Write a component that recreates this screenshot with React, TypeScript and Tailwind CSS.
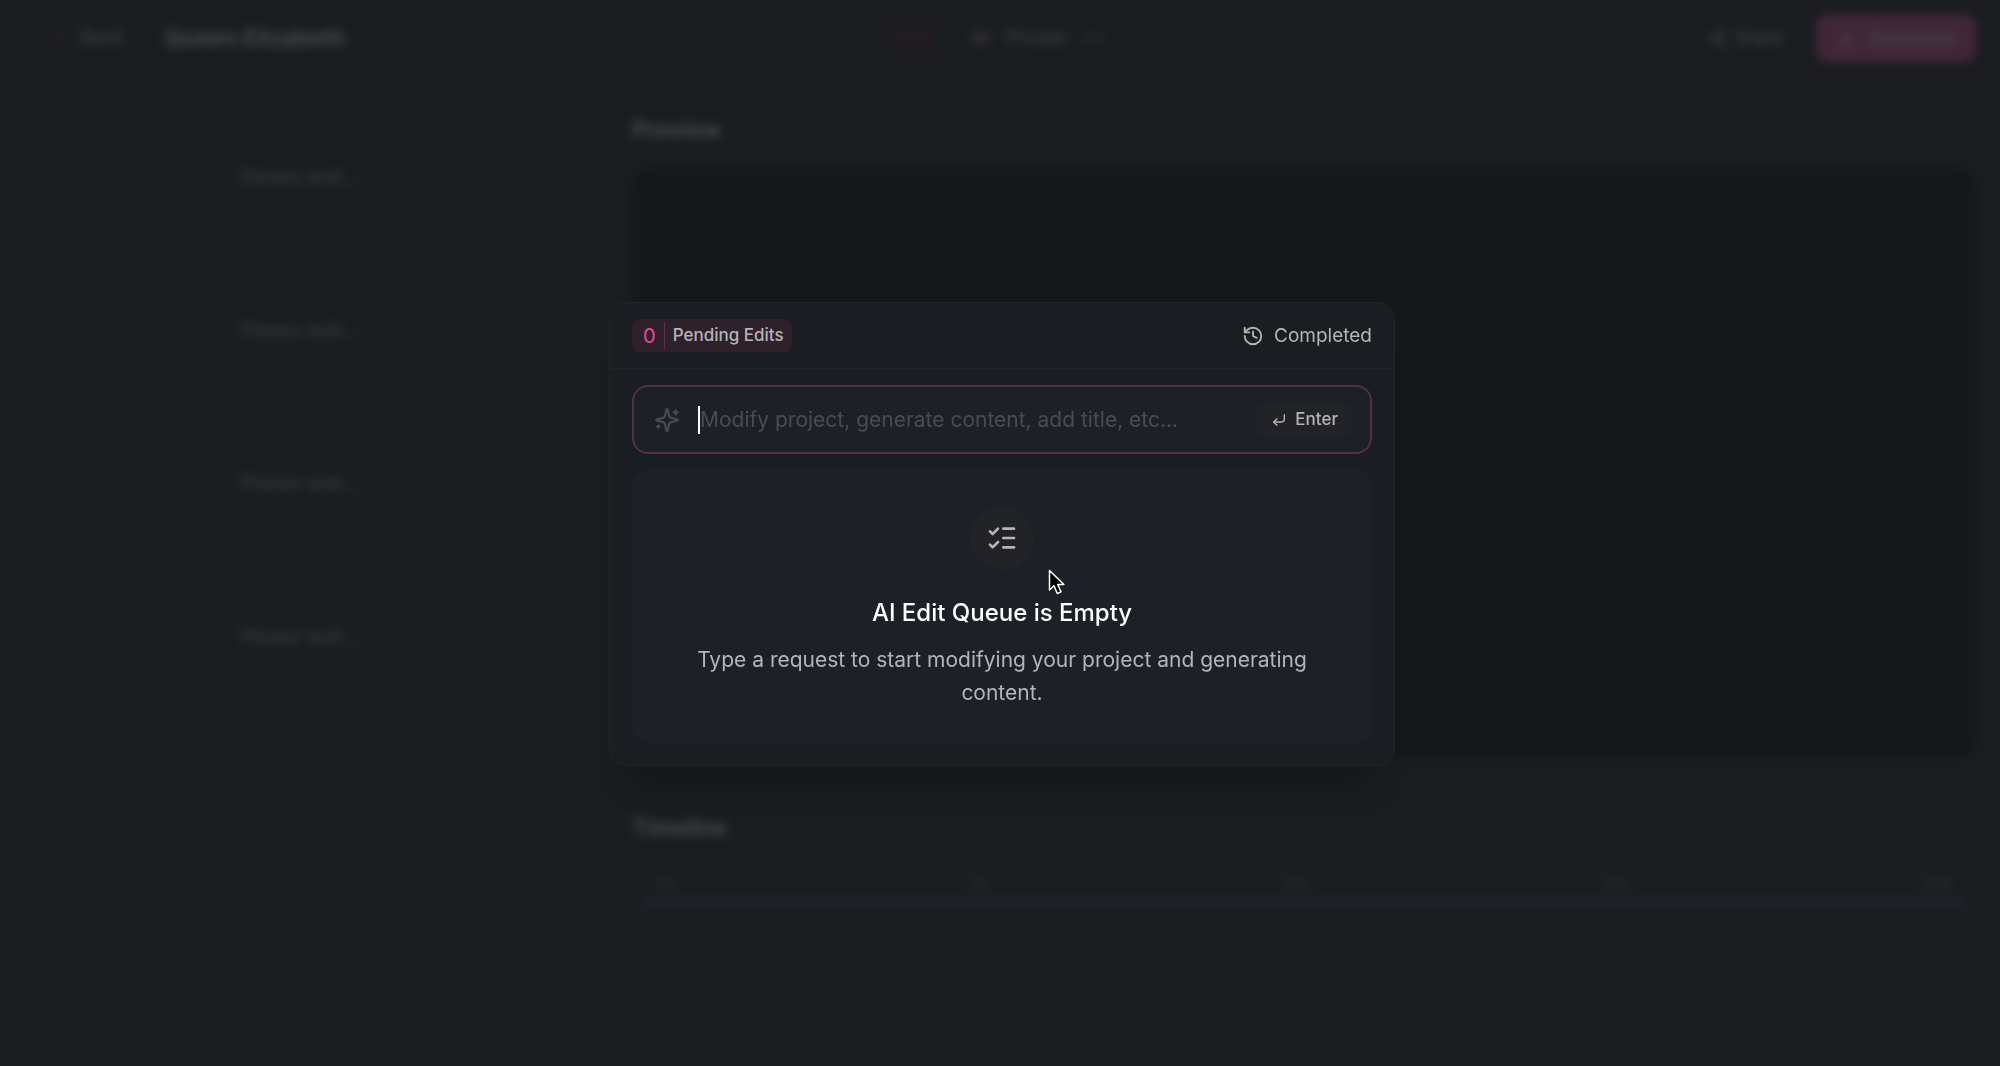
import { useState } from 'react';
import { ChevronLeft, CornerDownLeft, History, ListChecks, Share2, Download, Volume2, Ellipsis } from 'lucide-react';

const TICKS = ['0s', '5s', '10s', '15s', '20s'];
const CLIPS = [1, 2, 3, 4];

function SparklesIcon() {
    return (
        <svg
            viewBox="0 0 24 24"
            className="h-[26px] w-[26px] shrink-0 text-[#4b4b50]"
            fill="none"
            stroke="currentColor"
            strokeWidth="2"
            strokeLinecap="round"
            strokeLinejoin="round"
            aria-hidden="true"
        >
            <path d="M9.937 15.5A2 2 0 0 0 8.5 14.063l-6.135-1.582a.5.5 0 0 1 0-.962L8.5 9.936A2 2 0 0 0 9.937 8.5l1.582-6.135a.5.5 0 0 1 .963 0L14.063 8.5A2 2 0 0 0 15.5 9.937l6.135 1.581a.5.5 0 0 1 0 .964L15.5 14.063a2 2 0 0 0-1.437 1.437l-1.582 6.135a.5.5 0 0 1-.963 0z" />
            <path d="M20 3v4" />
            <path d="M22 5h-4" />
            <path d="M4 17v2" />
            <path d="M5 18H3" />
        </svg>
    );
}

function Cursor() {
    return (
        <svg viewBox="0 0 18 26" className="absolute left-[439px] top-[267px] h-[26px] w-[18px]" aria-hidden="true">
            <path
                d="M1.5 1.5v19.5l4.5-4.2 3.3 7.7 3.7-1.6-3.3-7.4h6.2z"
                fill="#000"
                stroke="#fff"
                strokeWidth="1.5"
                strokeLinejoin="round"
            />
        </svg>
    );
}

function Editor() {
    return (
        <div className="min-h-screen text-white" aria-hidden="true">
            <header className="grid h-[76px] grid-cols-3 items-center px-6">
                <div className="flex items-center gap-10 pl-7">
                    <button className="flex items-center gap-2 text-[19px] text-zinc-300">
                        <ChevronLeft className="h-5 w-5 text-pink-500" />
                        Back
                    </button>
                    <h1 className="text-[23px] font-semibold">Queen Elizabeth</h1>
                </div>
                <div className="flex items-center justify-center gap-9 text-lg text-zinc-300">
                    <span className="text-base font-semibold text-pink-800">BETA</span>
                    <div className="flex items-center gap-4">
                        <Volume2 className="h-5 w-5 text-pink-200" />
                        Private
                        <Ellipsis className="h-6 w-6" />
                    </div>
                </div>
                <div className="flex items-center justify-end gap-8">
                    <button className="flex items-center gap-2 text-lg text-zinc-300">
                        <Share2 className="h-5 w-5" />
                        Share
                    </button>
                    <button className="flex h-12 w-40 items-center justify-center gap-3 rounded-xl bg-[#d84e98] text-lg font-medium text-pink-100">
                        <Download className="h-5 w-5" />
                        Download
                    </button>
                </div>
            </header>

            <div className="grid grid-cols-[600px_1fr]">
                <aside className="flex flex-col pt-6">
                    {CLIPS.map((clip) => (
                        <div key={clip} className="flex h-[153px] justify-center pt-16 text-[19px] font-medium text-zinc-400">
                            Please wait...
                        </div>
                    ))}
                </aside>

                <main className="pl-8 pr-6">
                    <h2 className="pt-[38px] text-[23px] font-semibold leading-8">Preview</h2>
                    <div className="mt-[22px] h-[590px] rounded-2xl bg-[#000408]" />
                    <h2 className="mt-[54px] text-[23px] font-semibold leading-8">Timeline</h2>
                    <div className="mt-[26px] flex justify-between px-6 text-base text-zinc-500">
                        {TICKS.map((tick) => (
                            <span key={tick}>{tick}</span>
                        ))}
                    </div>
                    <div className="mx-3 mt-1 h-2 bg-[#3c4266]" />
                </main>
            </div>
        </div>
    );
}

function EditQueueDialog() {
    const [request, setRequest] = useState('');

    return (
        <section
            role="dialog"
            aria-label="AI edit queue"
            className="w-full rounded-2xl border border-[#212429] bg-[#1a1d21] shadow-[0_40px_30px_-24px_rgba(0,0,0,0.25)]"
        >
            <div className="flex items-center justify-between border-b border-[#212429] px-[22px] py-4">
                <div className="flex h-[33px] items-center rounded-lg bg-[#2f212b] py-[3px] pl-[11px] pr-2">
                    <span className="text-xl leading-6 text-[#ec4899]">0</span>
                    <span className="mx-2 h-full w-px bg-[#6b2b50]" />
                    <span className="text-[17px] font-medium text-[#b4b4b9]">Pending Edits</span>
                </div>
                <button className="flex items-center gap-[10px] text-[19px] leading-6 text-[#b4b4b9]">
                    <History className="h-[22px] w-[22px]" />
                    Completed
                </button>
            </div>

            <div className="flex flex-col gap-4 px-[22px] pb-[22px] pt-4">
                <form
                    className="flex h-[69px] items-center rounded-2xl border-2 border-[#572d47] bg-[#1e2027] pl-5 pr-[18px]"
                    onSubmit={(e) => e.preventDefault()}
                >
                    <SparklesIcon />
                    <span className="ml-[18px] h-7 w-[2px] shrink-0 bg-white" />
                    <input
                        type="text"
                        aria-label="Edit request"
                        value={request}
                        onChange={(e) => setRequest(e.target.value)}
                        placeholder="Modify project, generate content, add title, etc..."
                        className="h-8 min-w-0 flex-1 bg-transparent text-[21px] text-white caret-transparent outline-none placeholder:text-[#4b4b50]"
                    />
                    <button
                        type="submit"
                        className="flex h-8 items-center gap-2 rounded-md bg-[#222327] px-[14px] text-[17px] font-medium text-[#b4b4b9]"
                    >
                        <CornerDownLeft className="h-4 w-4" />
                        Enter
                    </button>
                </form>

                <div className="flex flex-col items-center rounded-2xl bg-[#1e2027] px-12 pb-[34px] pt-9 text-center">
                    <div className="flex h-16 w-16 items-center justify-center rounded-full bg-[#222327]">
                        <ListChecks className="h-8 w-8 text-[#b4b4b9]" />
                    </div>
                    <h2 className="mt-[27px] text-2xl font-medium leading-8 text-white">AI Edit Queue is Empty</h2>
                    <p className="mt-[14px] text-[21px] leading-[33px] text-[#b4b4b9]">
                        Type a request to start modifying your project and generating content.
                    </p>
                </div>
            </div>
        </section>
    );
}

export default function App() {
    return (
        <div className="relative min-h-screen overflow-hidden bg-[#1a1d21] font-['Inter',sans-serif]">
            <Editor />
            <div className="absolute inset-0 flex items-center justify-center bg-[#1a1d21]/80 pl-1 pt-[2px] backdrop-blur-[5px]">
                <div className="relative flex w-full max-w-[786px]">
                    <EditQueueDialog />
                    <Cursor />
                </div>
            </div>
        </div>
    );
}
